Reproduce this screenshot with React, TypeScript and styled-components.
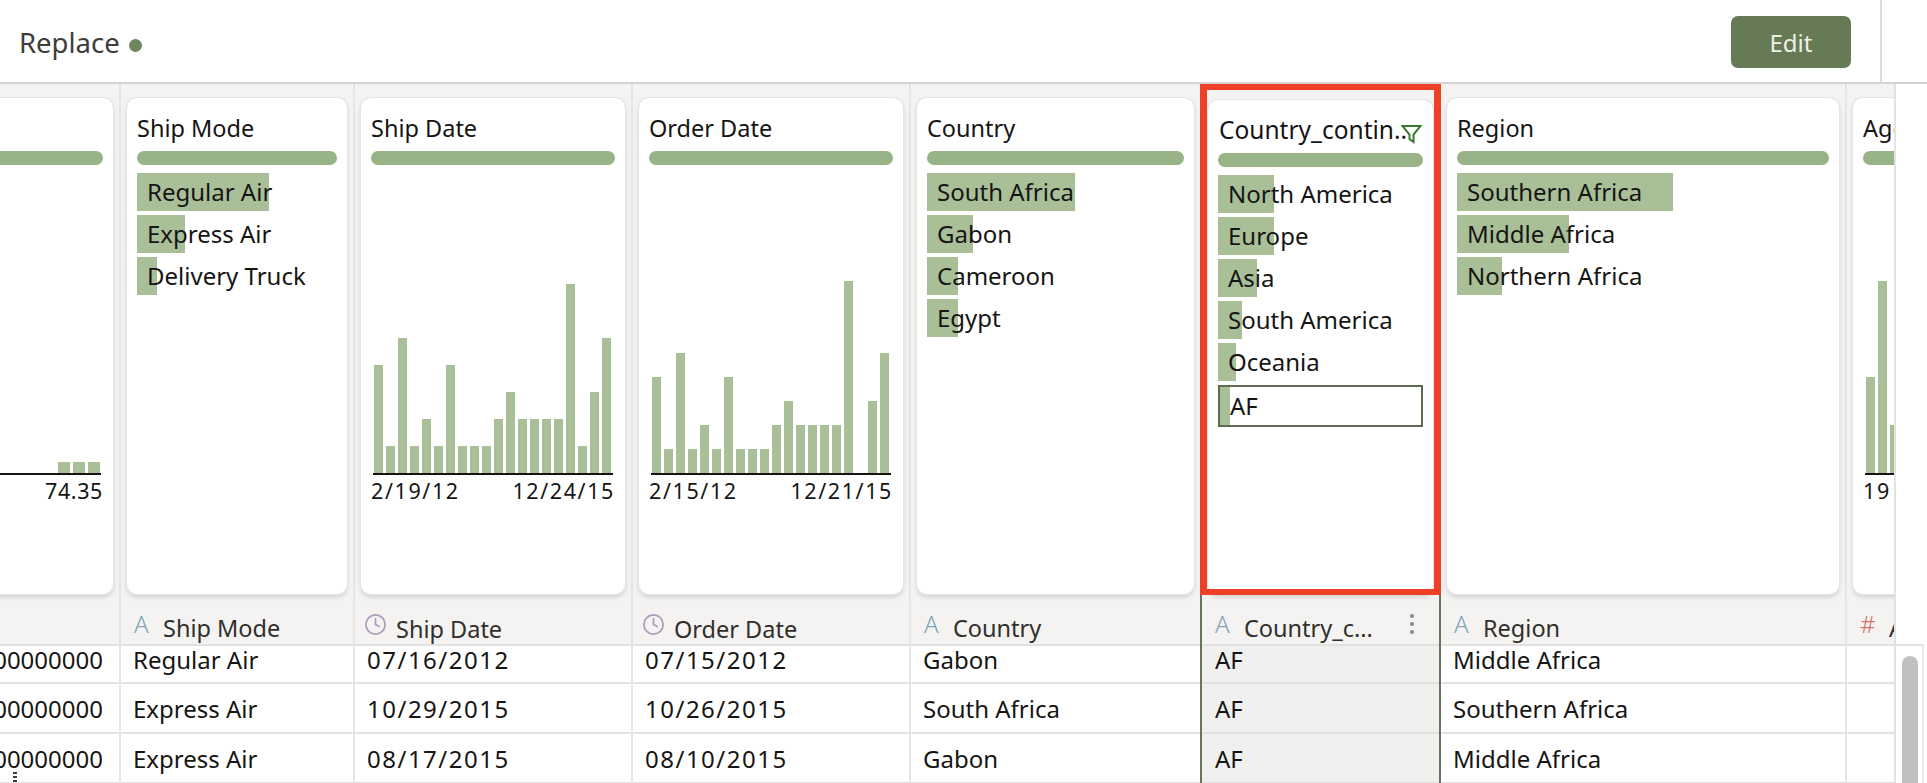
import styled, { createGlobalStyle } from 'styled-components';
import { Clock } from 'lucide-react';

const GlobalStyle = createGlobalStyle`
  html, body {
    margin: 0;
    padding: 0;
    background: #fff;
    overflow: hidden;
  }
  * {
    box-sizing: border-box;
  }
  body {
    font-family: 'Noto Sans', 'Open Sans', sans-serif;
    color: #161513;
  }
`;

const Page = styled.div`
  width: 1927px;
  height: 783px;
  overflow: hidden;
  display: flex;
  flex-direction: column;
`;

const TopBar = styled.div`
  flex: none;
  height: 84px;
  display: flex;
  align-items: stretch;
  border-bottom: 2px solid #d6d5d3;
`;

const TitleGroup = styled.div`
  flex: 1;
  display: flex;
  align-items: center;
  gap: 9px;
  padding: 3px 0 0 19px;
`;

const PageTitle = styled.span`
  font-size: 27.5px;
  line-height: 36px;
  color: #3e3d3a;
`;

const StatusDot = styled.span`
  width: 13px;
  height: 13px;
  margin-top: 6px;
  border-radius: 50%;
  background: #6f8560;
`;

const Actions = styled.div`
  flex: none;
  padding: 16px 29px 0 0;
`;

const EditButton = styled.button`
  width: 120px;
  height: 52px;
  padding: 2px 0 0;
  border: none;
  border-radius: 7px;
  background: #667a55;
  color: #eef0e6;
  font: 400 24px/32px 'Noto Sans', sans-serif;
`;

const TopRight = styled.div`
  flex: none;
  width: 47px;
  border-left: 2px solid #dedddb;
`;

const Body = styled.div`
  flex: 1;
  min-height: 0;
  display: flex;
`;

const Viewport = styled.div`
  position: relative;
  flex: none;
  width: 1896px;
  overflow: hidden;
  border-right: 2px solid #e3e2e0;
`;

const Columns = styled.div`
  display: flex;
  margin-left: -200px;
  width: 2500px;
`;

const Column = styled.div<{ $width: number; $edge?: string }>`
  position: relative;
  flex: none;
  width: ${p => p.$width}px;
  border-right: 2px solid ${p => p.$edge || '#e6e5e3'};
  background: #f4f3f1;
`;

const CardSlot = styled.div<{ $selected?: boolean }>`
  height: 510px;
  padding: ${p => (p.$selected ? '16px' : '14px')} 6px 0;
`;

const Card = styled.div<{ $selected?: boolean }>`
  height: ${p => (p.$selected ? 494 : 496)}px;
  padding: 15px 10px 0;
  background: #fff;
  border-radius: 10px;
  box-shadow: 0 0 0 1px #e6e5e3, 0 3px 5px rgba(0, 0, 0, 0.16);
  overflow: hidden;
`;

const CardTitleRow = styled.div`
  position: relative;
  height: 30px;
`;

const CardTitle = styled.div<{ $selected?: boolean }>`
  padding-left: ${p => (p.$selected ? 1 : 0)}px;
  font-size: ${p => (p.$selected ? 24.5 : 23.5)}px;
  line-height: 30px;
  white-space: nowrap;
  color: #161513;
`;

const FilterIcon = styled.svg`
  position: absolute;
  right: 1px;
  top: 9px;
`;

const SummaryBar = styled.div`
  height: 14px;
  margin: 8px 0;
  border-radius: 7px;
  background: #98b385;
`;

const ItemList = styled.div`
  display: flex;
  flex-direction: column;
  gap: 4px;
`;

const Item = styled.div<{ $fill: number; $boxed?: boolean }>`
  height: ${p => (p.$boxed ? 42 : 38)}px;
  padding-left: 10px;
  font-size: 24px;
  line-height: 38px;
  white-space: nowrap;
  background: linear-gradient(to right, #a9bf98 ${p => p.$fill}px, transparent ${p => p.$fill}px);
  border: ${p => (p.$boxed ? '2px solid #5f6b4f' : 'none')};
`;

const Chart = styled.div`
  margin: 0 2px;
`;

const Plot = styled.div<{ $gap: number; $end?: boolean }>`
  height: 302px;
  display: flex;
  align-items: flex-end;
  justify-content: ${p => (p.$end ? 'flex-end' : 'flex-start')};
  gap: ${p => p.$gap}px;
  padding: 0 1px;
  border-bottom: 2px solid #161513;
`;

const Bar = styled.div<{ $width: number; $height: number }>`
  flex: none;
  width: ${p => p.$width}px;
  height: ${p => p.$height}px;
  background: #a9bf98;
`;

const AxisLabels = styled.div<{ $spacing: number }>`
  display: flex;
  justify-content: space-between;
  margin: 3px -2px 0;
  font-size: 21.5px;
  line-height: 26px;
  letter-spacing: ${p => p.$spacing}px;
  white-space: nowrap;
`;

const ColumnHead = styled.div`
  display: flex;
  align-items: flex-end;
  height: 52px;
  padding: 0 0 0 10px;
  border-bottom: 2px solid #e2e1df;
  white-space: nowrap;
  overflow: hidden;
`;

const TypeIcon = styled.span<{ $color: string }>`
  flex: none;
  width: 32px;
  height: 30px;
  padding-left: 3px;
  margin-bottom: 5px;
  font-size: 24px;
  font-weight: 300;
  line-height: 30px;
  color: ${p => p.$color};
`;

const ClockSlot = styled.span`
  flex: none;
  display: flex;
  align-items: center;
  width: 32px;
  height: 30px;
  margin: 0 0 5px -1px;
  padding-right: 1px;
  color: #a99db9;
`;

const HeadLabel = styled.span<{ $drop?: boolean }>`
  flex: 1;
  padding-bottom: ${p => (p.$drop ? 0 : 1)}px;
  font-size: 23.5px;
  line-height: 30px;
  color: #312f2c;
`;

const Kebab = styled.svg`
  flex: none;
  margin: 0 24px 9px 0;
`;

const Cell = styled.div<{ $first?: boolean; $shade?: boolean; $right?: boolean; $digits?: boolean }>`
  height: ${p => (p.$first ? 38 : 50)}px;
  padding: ${p => (p.$first ? 0 : 1)}px ${p => (p.$right ? 16 : 14)}px 0 ${p => (p.$shade ? 13 : 12)}px;
  text-align: ${p => (p.$right ? 'right' : 'left')};
  font-size: 24px;
  line-height: ${p => (p.$first ? 28 : 48)}px;
  letter-spacing: ${p => (p.$digits ? 1.5 : 0)}px;
  white-space: nowrap;
  background: ${p => (p.$shade ? '#f0f0ee' : '#fff')};
  border-bottom: 2px solid #e3e2e0;
`;

const SelectionOutline = styled.div`
  position: absolute;
  top: 0;
  left: -2px;
  right: -2px;
  height: 511px;
  border-style: solid;
  border-color: #ee4027;
  border-width: 6px 7px;
  pointer-events: none;
`;

const ResizeGrip = styled.div`
  position: absolute;
  left: 13px;
  top: 688px;
  width: 4px;
  height: 10px;
  background: repeating-linear-gradient(to bottom, #3a3a38 0 2px, transparent 2px 4px);
`;

const Side = styled.div`
  flex: 1;
  display: flex;
  flex-direction: column;
`;

const SideSpacer = styled.div`
  flex: none;
  height: 560px;
`;

const ScrollTrack = styled.div`
  flex: 1;
  width: 28px;
  padding: 10px 4px 0 6px;
  border-top: 2px solid #e3e2e0;
  border-right: 2px solid #e9e8e6;
`;

const ScrollThumb = styled.div`
  height: 200px;
  border-radius: 8px;
  background: #c0c0c0;
`;

type HeadKind = 'text' | 'date' | 'number';

type ColumnData = {
  width: number;
  title?: string;
  head?: string;
  kind?: HeadKind;
  cells: string[];
  items?: { label: string; fill: number; boxed?: boolean }[];
  bars?: number[];
  barWidth?: number;
  barGap?: number;
  barsEnd?: boolean;
  axis?: string[];
  axisSpacing?: number;
  selected?: boolean;
  edge?: string;
  right?: boolean;
};

const GREEN_EDGE = '#66765a';

const columns: ColumnData[] = [
  {
    width: 321,
    title: '',
    cells: ['100000000000', '100000000000', '100000000000'],
    bars: [11, 11, 11],
    barWidth: 12,
    barGap: 3,
    barsEnd: true,
    axis: ['', '74.35'],
    axisSpacing: 0.6,
    right: true
  },
  {
    width: 234,
    title: 'Ship Mode',
    head: 'Ship Mode',
    kind: 'text',
    cells: ['Regular Air', 'Express Air', 'Express Air'],
    items: [
      { label: 'Regular Air', fill: 132 },
      { label: 'Express Air', fill: 48 },
      { label: 'Delivery Truck', fill: 20 }
    ]
  },
  {
    width: 278,
    title: 'Ship Date',
    head: 'Ship Date',
    kind: 'date',
    cells: ['07/16/2012', '10/29/2015', '08/17/2015'],
    bars: [4, 1, 5, 1, 2, 1, 4, 1, 1, 1, 2, 3, 2, 2, 2, 2, 7, 1, 3, 5].map(n => n * 27),
    axis: ['2/19/12', '12/24/15']
  },
  {
    width: 278,
    title: 'Order Date',
    head: 'Order Date',
    kind: 'date',
    cells: ['07/15/2012', '10/26/2015', '08/10/2015'],
    bars: [4, 1, 5, 1, 2, 1, 4, 1, 1, 1, 2, 3, 2, 2, 2, 2, 8, 0, 3, 5].map(n => n * 24),
    axis: ['2/15/12', '12/21/15']
  },
  {
    width: 291,
    title: 'Country',
    head: 'Country',
    kind: 'text',
    cells: ['Gabon', 'South Africa', 'Gabon'],
    edge: GREEN_EDGE,
    items: [
      { label: 'South Africa', fill: 148 },
      { label: 'Gabon', fill: 46 },
      { label: 'Cameroon', fill: 31 },
      { label: 'Egypt', fill: 31 }
    ]
  },
  {
    width: 239,
    title: 'Country_contin..',
    head: 'Country_c...',
    kind: 'text',
    cells: ['AF', 'AF', 'AF'],
    selected: true,
    edge: GREEN_EDGE,
    items: [
      { label: 'North America', fill: 56 },
      { label: 'Europe', fill: 56 },
      { label: 'Asia', fill: 39 },
      { label: 'South America', fill: 24 },
      { label: 'Oceania', fill: 18 },
      { label: 'AF', fill: 10, boxed: true }
    ]
  },
  {
    width: 406,
    title: 'Region',
    head: 'Region',
    kind: 'text',
    cells: ['Middle Africa', 'Southern Africa', 'Middle Africa'],
    items: [
      { label: 'Southern Africa', fill: 216 },
      { label: 'Middle Africa', fill: 112 },
      { label: 'Northern Africa', fill: 45 }
    ]
  },
  {
    width: 278,
    title: 'Age',
    head: 'Age',
    kind: 'number',
    cells: ['', '', ''],
    bars: [96, 192, 48, 24, 24],
    axis: ['19', '']
  }
];

const HeadIcon = ({ kind }: { kind?: HeadKind }) => {
  if (kind === 'date') {
    return (
      <ClockSlot>
        <Clock size={23} strokeWidth={1.8} />
      </ClockSlot>
    );
  }
  if (kind === 'number') return <TypeIcon $color='#d0735f'>#</TypeIcon>;
  if (kind === 'text') return <TypeIcon $color='#7fa5b8'>A</TypeIcon>;
  return null;
};

const App = () => {
  return (
    <Page>
      <GlobalStyle />
      <TopBar>
        <TitleGroup>
          <PageTitle>Replace</PageTitle>
          <StatusDot />
        </TitleGroup>
        <Actions>
          <EditButton>Edit</EditButton>
        </Actions>
        <TopRight />
      </TopBar>
      <Body>
        <Viewport>
          <Columns>
            {columns.map(col => (
              <Column key={col.width + (col.title || '')} $width={col.width} $edge={col.edge}>
                <CardSlot $selected={col.selected}>
                  <Card $selected={col.selected}>
                    <CardTitleRow>
                      <CardTitle $selected={col.selected}>{col.title}</CardTitle>
                      {col.selected && (
                        <FilterIcon width='21' height='20' viewBox='0 0 21 20' fill='none'>
                          <path d='M1.5 2h18l-7 8.5V18l-4-3v-4.5L1.5 2z' stroke='#3a7a30' strokeWidth='2' />
                        </FilterIcon>
                      )}
                    </CardTitleRow>
                    <SummaryBar />
                    {col.items && (
                      <ItemList>
                        {col.items.map(item => (
                          <Item key={item.label} $fill={item.fill} $boxed={item.boxed}>
                            {item.label}
                          </Item>
                        ))}
                      </ItemList>
                    )}
                    {col.bars && (
                      <Chart>
                        <Plot $gap={col.barGap ?? 3} $end={col.barsEnd}>
                          {col.bars.map((h, i) => (
                            <Bar key={i} $width={col.barWidth ?? 9} $height={h} />
                          ))}
                        </Plot>
                        <AxisLabels $spacing={col.axisSpacing ?? 1.6}>
                          {col.axis?.map((label, i) => (
                            <span key={i}>{label}</span>
                          ))}
                        </AxisLabels>
                      </Chart>
                    )}
                  </Card>
                </CardSlot>
                <ColumnHead>
                  <HeadIcon kind={col.kind} />
                  <HeadLabel $drop={col.kind === 'date'}>{col.head}</HeadLabel>
                  {col.selected && (
                    <Kebab width='6' height='22' viewBox='0 0 6 22' fill='#8a8a88'>
                      <circle cx='3' cy='3' r='2' />
                      <circle cx='3' cy='11' r='2' />
                      <circle cx='3' cy='19' r='2' />
                    </Kebab>
                  )}
                </ColumnHead>
                {col.cells.map((text, i) => (
                  <Cell key={i} $first={i === 0} $shade={col.selected} $right={col.right} $digits={col.kind === 'date'}>
                    {text}
                  </Cell>
                ))}
                {col.selected && <SelectionOutline />}
              </Column>
            ))}
          </Columns>
          <ResizeGrip />
        </Viewport>
        <Side>
          <SideSpacer />
          <ScrollTrack>
            <ScrollThumb />
          </ScrollTrack>
        </Side>
      </Body>
    </Page>
  );
};

export default App;
